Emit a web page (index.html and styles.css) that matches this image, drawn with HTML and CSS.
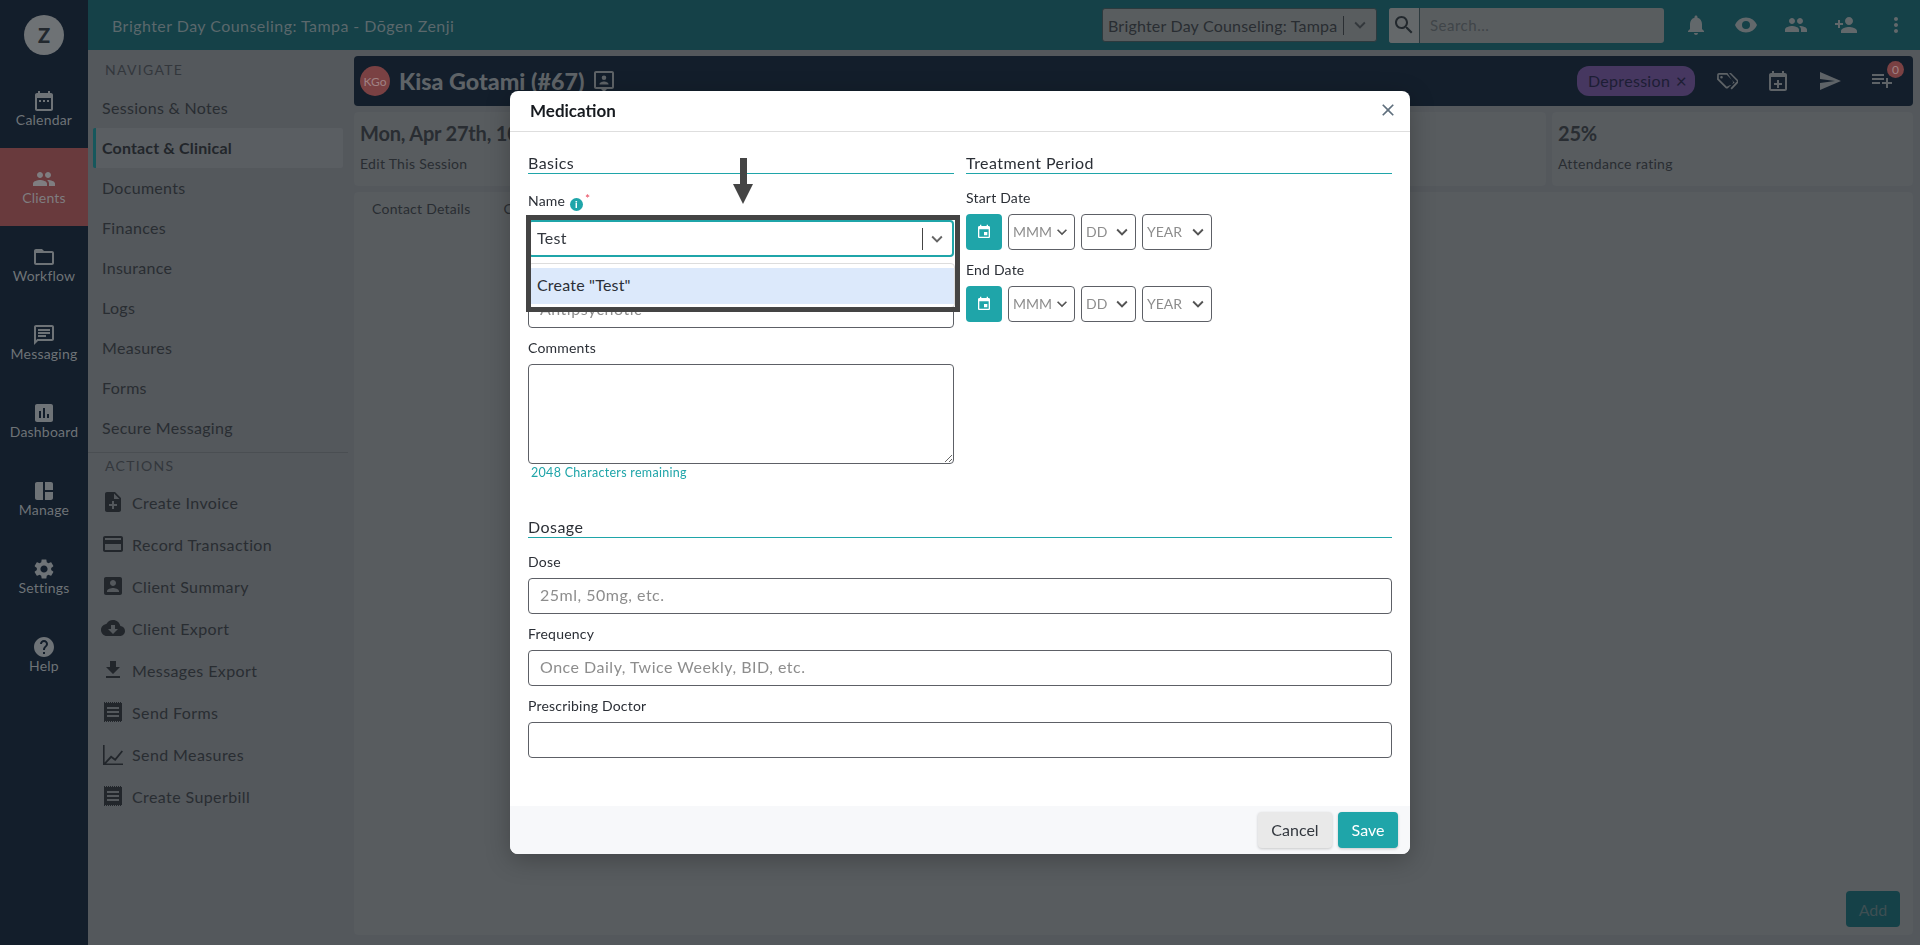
FILE: index.html
```html
<!DOCTYPE html>
<html lang="en">
<head>
    <meta charset="UTF-8">
    <meta name="viewport" content="width=device-width, initial-scale=1.0">
    <title>Medication</title>
    <link rel="stylesheet" href="styles.css">
</head>
<body>
<aside class="rail">
    <div class="rail_logo">Z</div>
    <a class="rail_item"><svg viewBox="0 0 24 24"><path d="M9 11H7v2h2v-2zm4 0h-2v2h2v-2zm4 0h-2v2h2v-2zm2-7h-1V2h-2v2H8V2H6v2H5c-1.11 0-1.99.9-1.99 2L3 20c0 1.1.89 2 2 2h14c1.1 0 2-.9 2-2V6c0-1.1-.9-2-2-2zm0 16H5V9h14v11z"/></svg>Calendar</a>
    <a class="rail_item active"><svg viewBox="0 0 24 24"><path d="M16 11c1.66 0 2.99-1.34 2.99-3S17.66 5 16 5c-1.66 0-3 1.34-3 3s1.34 3 3 3zm-8 0c1.66 0 2.99-1.34 2.99-3S9.66 5 8 5C6.34 5 5 6.34 5 8s1.34 3 3 3zm0 2c-2.33 0-7 1.17-7 3.5V19h14v-2.5c0-2.33-4.67-3.5-7-3.5zm8 0c-.29 0-.62.02-.97.05 1.16.84 1.97 1.97 1.97 3.45V19h6v-2.5c0-2.33-4.67-3.5-7-3.5z"/></svg>Clients</a>
    <a class="rail_item"><svg viewBox="0 0 24 24"><path d="M20 6h-8l-2-2H4c-1.1 0-1.99.9-1.99 2L2 18c0 1.1.9 2 2 2h16c1.1 0 2-.9 2-2V8c0-1.1-.9-2-2-2zm0 12H4V8h16v10z"/></svg>Workflow</a>
    <a class="rail_item"><svg viewBox="0 0 24 24"><path d="M20 2H4c-1.1 0-1.99.9-1.99 2L2 22l4-4h14c1.1 0 2-.9 2-2V4c0-1.1-.9-2-2-2zm0 14H5.17L4 17.17V4h16v12zM6 6h12v2H6zm0 3h12v2H6zm0 3h8v2H6z"/></svg>Messaging</a>
    <a class="rail_item"><svg viewBox="0 0 24 24"><path d="M19 3H5c-1.1 0-2 .9-2 2v14c0 1.1.9 2 2 2h14c1.1 0 2-.9 2-2V5c0-1.1-.9-2-2-2zM9 17H7v-7h2v7zm4 0h-2V7h2v10zm4 0h-2v-4h2v4z"/></svg>Dashboard</a>
    <a class="rail_item"><svg viewBox="0 0 24 24"><path d="M3 21h8V3H5c-1.1 0-2 .9-2 2v14c0 1.1.9 2 2 2zM13 3v8h8V5c0-1.1-.9-2-2-2zM13 21h6c1.1 0 2-.9 2-2v-6h-8z"/></svg>Manage</a>
    <a class="rail_item"><svg viewBox="0 0 24 24"><path d="M19.14 12.94c.04-.3.06-.61.06-.94 0-.32-.02-.64-.07-.94l2.03-1.58c.18-.14.23-.41.12-.61l-1.92-3.32c-.12-.22-.37-.29-.59-.22l-2.39.96c-.5-.38-1.03-.7-1.62-.94l-.36-2.54c-.04-.24-.24-.41-.48-.41h-3.84c-.24 0-.43.17-.47.41l-.36 2.54c-.59.24-1.13.57-1.62.94l-2.39-.96c-.22-.08-.47 0-.59.22L2.74 8.87c-.12.21-.08.47.12.61l2.03 1.58c-.05.3-.09.63-.09.94s.02.64.07.94l-2.03 1.58c-.18.14-.23.41-.12.61l1.92 3.32c.12.22.37.29.59.22l2.39-.96c.5.38 1.03.7 1.62.94l.36 2.54c.05.24.24.41.48.41h3.84c.24 0 .44-.17.47-.41l.36-2.54c.59-.24 1.13-.56 1.62-.94l2.39.96c.22.08.47 0 .59-.22l1.92-3.32c.12-.22.07-.47-.12-.61l-2.01-1.58zM12 15.6c-1.98 0-3.6-1.62-3.6-3.6s1.62-3.6 3.6-3.6 3.6 1.62 3.6 3.6-1.62 3.6-3.6 3.6z"/></svg>Settings</a>
    <a class="rail_item"><svg viewBox="0 0 24 24"><path d="M12 2C6.48 2 2 6.48 2 12s4.48 10 10 10 10-4.48 10-10S17.52 2 12 2zm1 17h-2v-2h2v2zm2.07-7.75l-.9.92C13.45 12.9 13 13.5 13 15h-2v-.5c0-1.1.45-2.1 1.17-2.83l1.24-1.26c.37-.36.59-.86.59-1.41 0-1.1-.9-2-2-2s-2 .9-2 2H8c0-2.21 1.79-4 4-4s4 1.79 4 4c0 .88-.36 1.68-.93 2.25z"/></svg>Help</a>
</aside>

<div class="page">
    <header class="topbar">
        <div class="topbar_title">Brighter Day Counseling: Tampa - Dōgen Zenji</div>
        <div class="practice_select">
            <span>Brighter Day Counseling: Tampa</span>
            <svg viewBox="0 0 24 24"><path d="M7.41 8.59 12 13.17l4.59-4.58L18 10l-6 6-6-6z"/></svg>
        </div>
        <div class="search">
            <div class="search_btn"><svg viewBox="0 0 24 24"><path d="M15.5 14h-.79l-.28-.27C15.41 12.59 16 11.11 16 9.5 16 5.91 13.09 3 9.5 3S3 5.91 3 9.5 5.91 16 9.5 16c1.61 0 3.09-.59 4.23-1.57l.27.28v.79l5 4.99L20.49 19l-4.99-5zm-6 0C7.01 14 5 11.99 5 9.5S7.01 5 9.5 5 14 7.01 14 9.5 11.99 14 9.5 14z"/></svg></div>
            <div class="search_input">Search...</div>
        </div>
        <div class="topbar_icons">
            <svg viewBox="0 0 24 24"><path d="M12 22c1.1 0 2-.9 2-2h-4c0 1.1.89 2 2 2zm6-6v-5c0-3.07-1.64-5.64-4.5-6.32V4c0-.83-.67-1.5-1.5-1.5s-1.5.67-1.5 1.5v.68C7.63 5.36 6 7.92 6 11v5l-2 2v1h16v-1l-2-2z"/></svg>
            <svg viewBox="0 0 24 24"><path fill-rule="evenodd" d="M12 4.5C7 4.5 2.73 7.61 1 12c1.73 4.39 6 7.5 11 7.5s9.27-3.11 11-7.5c-1.73-4.39-6-7.5-11-7.5zM12 8a4 4 0 1 0 0 8 4 4 0 0 0 0-8z"/></svg>
            <svg viewBox="0 0 24 24"><path d="M16 11c1.66 0 2.99-1.34 2.99-3S17.66 5 16 5c-1.66 0-3 1.34-3 3s1.34 3 3 3zm-8 0c1.66 0 2.99-1.34 2.99-3S9.66 5 8 5C6.34 5 5 6.34 5 8s1.34 3 3 3zm0 2c-2.33 0-7 1.17-7 3.5V19h14v-2.5c0-2.33-4.67-3.5-7-3.5zm8 0c-.29 0-.62.02-.97.05 1.16.84 1.97 1.97 1.97 3.45V19h6v-2.5c0-2.33-4.67-3.5-7-3.5z"/></svg>
            <svg viewBox="0 0 24 24"><path d="M15 12c2.21 0 4-1.79 4-4s-1.79-4-4-4-4 1.79-4 4 1.79 4 4 4zm-9-2V7H4v3H1v2h3v3h2v-3h3v-2H6zm9 4c-2.67 0-8 1.34-8 4v2h16v-2c0-2.66-5.33-4-8-4z"/></svg>
            <svg viewBox="0 0 24 24"><path d="M12 8c1.1 0 2-.9 2-2s-.9-2-2-2-2 .9-2 2 .9 2 2 2zm0 2c-1.1 0-2 .9-2 2s.9 2 2 2 2-.9 2-2-.9-2-2-2zm0 6c-1.1 0-2 .9-2 2s.9 2 2 2 2-.9 2-2-.9-2-2-2z"/></svg>
        </div>
    </header>

    <div class="content">
        <nav class="sidenav">
            <div class="sidenav_label">NAVIGATE</div>
            <a class="sidenav_link">Sessions &amp; Notes</a>
            <a class="sidenav_link active">Contact &amp; Clinical</a>
            <a class="sidenav_link">Documents</a>
            <a class="sidenav_link">Finances</a>
            <a class="sidenav_link">Insurance</a>
            <a class="sidenav_link">Logs</a>
            <a class="sidenav_link">Measures</a>
            <a class="sidenav_link">Forms</a>
            <a class="sidenav_link">Secure Messaging</a>
            <div class="sidenav_label actions">ACTIONS</div>
            <a class="action_link"><svg viewBox="0 0 24 24"><path d="M14 2H6c-1.1 0-1.99.9-1.99 2L4 20c0 1.1.89 2 1.99 2H18c1.1 0 2-.9 2-2V8l-6-6zm2 14h-3v3h-2v-3H8v-2h3v-3h2v3h3v2zm-3-7V3.5L18.5 9H13z"/></svg>Create Invoice</a>
            <a class="action_link"><svg viewBox="0 0 24 24"><path d="M20 4H4c-1.11 0-1.99.89-1.99 2L2 18c0 1.11.89 2 2 2h16c1.11 0 2-.89 2-2V6c0-1.11-.89-2-2-2zm0 14H4v-6h16v6zm0-10H4V6h16v2z"/></svg>Record Transaction</a>
            <a class="action_link"><svg viewBox="0 0 24 24"><path d="M3 5v14c0 1.1.89 2 2 2h14c1.1 0 2-.9 2-2V5c0-1.1-.9-2-2-2H5c-1.11 0-2 .9-2 2zm12 4c0 1.66-1.34 3-3 3s-3-1.34-3-3 1.34-3 3-3 3 1.34 3 3zm-9 8c0-2 4-3.1 6-3.1s6 1.1 6 3.1v1H6v-1z"/></svg>Client Summary</a>
            <a class="action_link"><svg viewBox="0 0 24 24"><path d="M19.35 10.04C18.67 6.59 15.64 4 12 4 9.11 4 6.6 5.64 5.35 8.04 2.34 8.36 0 10.91 0 14c0 3.31 2.69 6 6 6h13c2.76 0 5-2.24 5-5 0-2.64-2.05-4.78-4.65-4.96zM17 13l-5 5-5-5h3V9h4v4h3z"/></svg>Client Export</a>
            <a class="action_link"><svg viewBox="0 0 24 24"><path d="M19 9h-4V3H9v6H5l7 7 7-7zM5 18v2h14v-2H5z"/></svg>Messages Export</a>
            <a class="action_link"><svg viewBox="0 0 24 24"><path fill-rule="evenodd" d="M3 3h18v18H3zM6 7v2h12V7zm0 4v2h12v-2zm0 4v2h12v-2z"/><path class="teeth" d="M3 2.5h18M3 21.5h18"/></svg>Send Forms</a>
            <a class="action_link"><svg viewBox="0 0 24 24"><path d="M2 3h1.6v17.4L10 13.5l4 3 6.6-8L22 9.6 14.3 19l-4-3-5.2 5.4H22V23H2z"/></svg>Send Measures</a>
            <a class="action_link"><svg viewBox="0 0 24 24"><path fill-rule="evenodd" d="M3 3h18v18H3zM6 7v2h12V7zm0 4v2h12v-2zm0 4v2h12v-2z"/><path class="teeth" d="M3 2.5h18M3 21.5h18"/></svg>Create Superbill</a>
        </nav>

        <main class="main">
            <div class="client_bar">
                <div class="avatar">KGo</div>
                <h1>Kisa Gotami (#67)</h1>
                <svg class="client_note" viewBox="0 0 24 24"><path d="M20 2H4c-1.1 0-2 .9-2 2v14c0 1.1.9 2 2 2h5l3 3 3-3h5c1.1 0 2-.9 2-2V4c0-1.1-.9-2-2-2zm0 16H4V4h16v14zM12 11a2.3 2.3 0 1 0 0-4.6 2.3 2.3 0 0 0 0 4.6zm4.5 4c0-1.7-3-2.6-4.5-2.6S7.5 13.3 7.5 15v.6h9z"/></svg>
                <div class="client_actions">
                    <span class="chip">Depression <b>×</b></span>
                    <svg viewBox="0 0 24 24"><path d="M13.4 4H5c-1 0-1.8.8-1.8 1.8L3 10.500l8.500 8.500c.7.7 1.900.7 2.600 0l4.400-4.400c.7-.7.7-1.900 0-2.600zM12.800 17.700l-8-8V5.800h7.900l8 8zM7.500 7a1.300 1.300 0 1 0 0 2.600 1.300 1.300 0 0 0 0-2.600zM17 4h-2l8 8.300-6.500 7 1.300 1.200 7-7.300c.4-.4.4-1.100 0-1.500z"/></svg>
                    <svg viewBox="0 0 24 24"><path d="M19 4h-1V2h-2v2H8V2H6v2H5c-1.1 0-2 .9-2 2v14c0 1.1.9 2 2 2h14c1.1 0 2-.9 2-2V6c0-1.1-.9-2-2-2zm0 16H5V8h14v12zm-8-9h2v3h3v2h-3v3h-2v-3H8v-2h3z"/></svg>
                    <svg viewBox="0 0 24 24"><path d="M2.01 21L23 12 2.01 3 2 10l15 2-15 2z"/></svg>
                    <div class="queue">
                        <svg viewBox="0 0 24 24"><path d="M14 10H2v2h12v-2zm0-4H2v2h12V6zm4 8v-4h-2v4h-4v2h4v4h2v-4h4v-2h-4zM2 16h8v-2H2v2z"/></svg>
                        <span class="queue_count">0</span>
                    </div>
                </div>
            </div>

            <div class="cards">
                <div class="card"><strong>Mon, Apr 27th, 10:00am</strong><span>Edit This Session</span></div>
                <div class="card"></div>
                <div class="card"></div>
                <div class="card rating"><strong>25%</strong><span>Attendance rating</span></div>
            </div>

            <section class="panel">
                <div class="tabs"><a>Contact Details</a><a>Clinical</a></div>
                <button class="add_btn">Add</button>
            </section>
        </main>
    </div>
</div>

<div class="modal">
    <div class="modal_head">
        <h2>Medication</h2>
        <svg viewBox="0 0 24 24"><path d="M19 6.41 17.59 5 12 10.59 6.41 5 5 6.41 10.59 12 5 17.59 6.41 19 12 13.41 17.59 19 19 17.59 13.41 12z"/></svg>
    </div>
    <div class="modal_body">
        <div class="two_col">
            <div>
                <h3>Basics</h3>
                <div class="field name_field">
                    <label>Name <i class="info">i</i><em>*</em></label>
                    <div class="combo">
                        <span>Test</span>
                        <svg viewBox="0 0 24 24"><path d="M7.41 8.59 12 13.17l4.59-4.58L18 10l-6 6-6-6z"/></svg>
                    </div>
                    <div class="combo_menu"><div class="combo_option">Create "Test"</div></div>
                </div>
                <div class="field type_field">
                    <label>&nbsp;</label>
                    <input type="text" placeholder="Antipsychotic">
                </div>
                <div class="field">
                    <label>Comments</label>
                    <textarea></textarea>
                    <div class="remaining">2048 Characters remaining</div>
                </div>
            </div>
            <div>
                <h3>Treatment Period</h3>
                <div class="field">
                    <label>Start Date</label>
                    <div class="date_row">
                        <div class="date_btn"><svg viewBox="0 0 24 24"><path d="M19 3h-1V1h-2v2H8V1H6v2H5c-1.11 0-1.99.9-1.99 2L3 19c0 1.1.89 2 2 2h14c1.1 0 2-.9 2-2V5c0-1.1-.9-2-2-2zm0 16H5V8h14v11zM12 12h5v5h-5z"/></svg></div>
                        <div class="date_sel month">MMM<svg viewBox="0 0 24 24"><path d="M7.41 8.59 12 13.17l4.59-4.58L18 10l-6 6-6-6z"/></svg></div>
                        <div class="date_sel day">DD<svg viewBox="0 0 24 24"><path d="M7.41 8.59 12 13.17l4.59-4.58L18 10l-6 6-6-6z"/></svg></div>
                        <div class="date_sel year">YEAR<svg viewBox="0 0 24 24"><path d="M7.41 8.59 12 13.17l4.59-4.58L18 10l-6 6-6-6z"/></svg></div>
                    </div>
                </div>
                <div class="field">
                    <label>End Date</label>
                    <div class="date_row">
                        <div class="date_btn"><svg viewBox="0 0 24 24"><path d="M19 3h-1V1h-2v2H8V1H6v2H5c-1.11 0-1.99.9-1.99 2L3 19c0 1.1.89 2 2 2h14c1.1 0 2-.9 2-2V5c0-1.1-.9-2-2-2zm0 16H5V8h14v11zM12 12h5v5h-5z"/></svg></div>
                        <div class="date_sel month">MMM<svg viewBox="0 0 24 24"><path d="M7.41 8.59 12 13.17l4.59-4.58L18 10l-6 6-6-6z"/></svg></div>
                        <div class="date_sel day">DD<svg viewBox="0 0 24 24"><path d="M7.41 8.59 12 13.17l4.59-4.58L18 10l-6 6-6-6z"/></svg></div>
                        <div class="date_sel year">YEAR<svg viewBox="0 0 24 24"><path d="M7.41 8.59 12 13.17l4.59-4.58L18 10l-6 6-6-6z"/></svg></div>
                    </div>
                </div>
            </div>
        </div>

        <h3 class="dosage">Dosage</h3>
        <div class="field">
            <label>Dose</label>
            <input type="text" placeholder="25ml, 50mg, etc.">
        </div>
        <div class="field">
            <label>Frequency</label>
            <input type="text" placeholder="Once Daily, Twice Weekly, BID, etc.">
        </div>
        <div class="field">
            <label>Prescribing Doctor</label>
            <input type="text">
        </div>
    </div>
    <div class="modal_foot">
        <button class="btn_cancel">Cancel</button>
        <button class="btn_save">Save</button>
    </div>

    <!-- annotation drawn on top of the form -->
    <div class="callout_box"></div>
    <div class="callout_arrow"></div>
</div>
</body>
</html>
```
FILE: styles.css
```css
body {
    display: flex;
    height: 945px;
    margin: 0;
    overflow: hidden;
    background-color: #54585c;
    font-family: Lato, "Open Sans", sans-serif;
    color: #292d32;
}

svg {
    fill: currentColor;
}

/* left rail */
.rail {
    flex: none;
    width: 88px;
    background-color: #131e2b;
    color: #6e7377;
}

.rail_logo {
    display: flex;
    align-items: center;
    justify-content: center;
    width: 40px;
    height: 40px;
    margin: 15px 24px;
    border-radius: 50%;
    background-color: #6e7275;
    color: #22282e;
    font-size: 20px;
    font-weight: 900;
}

.rail_item {
    display: flex;
    flex-direction: column;
    align-items: center;
    height: 78px;
    box-sizing: border-box;
    padding-top: 19px;
    font-size: 14px;
    line-height: 18px;
    letter-spacing: 0.2px;
}

.rail_item svg {
    width: 24px;
    height: 24px;
    margin-bottom: -2px;
}

.rail_item.active {
    background-color: #693a3d;
    color: #7f7d80;
}

/* top bar */
.page {
    display: flex;
    flex: 1;
    flex-direction: column;
    min-width: 0;
}

.topbar {
    display: flex;
    flex: none;
    align-items: center;
    height: 50px;
    padding-left: 24px;
    background-color: #154148;
    box-sizing: border-box;
}

.topbar_title {
    flex: 1;
    color: #5b686c;
    font-size: 16px;
    letter-spacing: 0.45px;
}

.practice_select {
    display: flex;
    align-items: center;
    width: 275px;
    height: 34px;
    padding-left: 5px;
    box-sizing: border-box;
    border-radius: 3px;
    background-color: #595d5f;
    border: 1px solid #2d3a3e;
    font-size: 16px;
    letter-spacing: 0.2px;
    white-space: nowrap;
}

.practice_select span {
    padding-right: 6px;
    border-right: 1px solid #2a2e32;
}

.practice_select svg {
    width: 22px;
    height: 22px;
    margin-left: 5px;
    color: #33383c;
}

.search {
    display: flex;
    width: 275px;
    height: 35px;
    margin-left: 12px;
    border-radius: 3px;
    overflow: hidden;
    background-color: #595d5f;
}

.search_btn {
    display: flex;
    align-items: center;
    justify-content: center;
    width: 30px;
    border-right: 1px solid #2d3a3e;
    background-color: #64686a;
    color: #22282d;
}

.search_btn svg {
    width: 24px;
    height: 24px;
}

.search_input {
    padding: 8px 10px;
    color: #404549;
    font-size: 15px;
    letter-spacing: 0.5px;
}

.topbar_icons {
    display: flex;
    gap: 26px;
    padding: 0 12px 0 20px;
    color: #62686b;
}

.topbar_icons svg {
    width: 24px;
    height: 24px;
}

/* side navigation */
.content {
    display: flex;
    flex: 1;
    min-height: 0;
}

.sidenav {
    flex: none;
    width: 266px;
    padding-top: 10px;
    box-sizing: border-box;
}

.sidenav_label {
    height: 20px;
    margin-bottom: 8px;
    padding-left: 17px;
    color: #33373c;
    font-size: 14px;
    line-height: 20px;
    letter-spacing: 1.3px;
}

.sidenav_label.actions {
    height: 24px;
    margin: 4px 6px 4px 0;
    border-top: 1px solid #4a4e52;
    line-height: 26px;
}

.sidenav_link {
    display: block;
    height: 40px;
    margin: 0 11px 0 5px;
    padding-left: 6px;
    border-left: 3px solid transparent;
    border-radius: 2px;
    font-size: 16px;
    line-height: 39px;
    letter-spacing: 0.3px;
}

.sidenav_link.active {
    border-left-color: #16575c;
    background-color: #5a5e62;
    font-weight: 700;
    color: #22262b;
    letter-spacing: 0.15px;
}

.action_link {
    display: flex;
    align-items: center;
    gap: 7px;
    height: 42px;
    padding-left: 13px;
    font-size: 16px;
    letter-spacing: 0.4px;
}

.action_link svg {
    flex: none;
    width: 24px;
    height: 24px;
    color: #22262b;
}

.teeth {
    fill: none;
    stroke: currentColor;
    stroke-width: 1;
    stroke-dasharray: 1 1;
}

/* client header, cards, panel */
.main {
    display: flex;
    flex: 1;
    flex-direction: column;
    gap: 6px;
    min-width: 0;
    padding: 6px 7px 10px 0;
}

.client_bar {
    display: flex;
    flex: none;
    align-items: center;
    height: 50px;
    padding: 0 19px 0 6px;
    box-sizing: border-box;
    border-radius: 4px;
    background-color: #131e2b;
    color: #5e6367;
}

.avatar {
    display: flex;
    align-items: center;
    justify-content: center;
    width: 30px;
    height: 30px;
    border-radius: 50%;
    background-color: #7a4143;
    color: #a08284;
    font-size: 12px;
}

.client_bar h1 {
    margin: 0 8px 0 9px;
    font-size: 23.3px;
    font-weight: 900;
    white-space: nowrap;
}

.client_note {
    width: 24px;
    height: 24px;
}

.client_actions {
    display: flex;
    align-items: center;
    gap: 28px;
    margin-left: auto;
}

.client_actions svg {
    width: 24px;
    height: 24px;
}

.chip {
    display: flex;
    align-items: center;
    justify-content: space-between;
    width: 118px;
    height: 30px;
    margin-right: -9px;
    padding: 0 8px 2px 11px;
    box-sizing: border-box;
    border-radius: 12px;
    background-color: #463760;
    color: #1d1e35;
    font-size: 16px;
    letter-spacing: 0.3px;
}

.chip b {
    font-size: 19px;
    font-weight: 400;
}

.queue {
    position: relative;
}

.queue_count {
    position: absolute;
    top: -7px;
    right: -10px;
    width: 17px;
    height: 17px;
    border-radius: 50%;
    background-color: #7a4143;
    color: #a08284;
    font-size: 12px;
    line-height: 17px;
    text-align: center;
}

.cards {
    display: flex;
    flex: none;
    gap: 6px;
    height: 74px;
}

.card {
    display: flex;
    flex: 1;
    flex-direction: column;
    gap: 9px;
    padding: 8px 6px;
    box-sizing: border-box;
    border-radius: 4px;
    background-color: #585c5f;
}

.card.rating {
    flex: none;
    width: 361px;
}

.card strong {
    font-size: 20px;
    line-height: 26px;
    letter-spacing: -0.2px;
    white-space: nowrap;
}

.card span {
    font-size: 14px;
    letter-spacing: 0.3px;
}

.panel {
    display: flex;
    flex: 1;
    flex-direction: column;
    border-radius: 4px;
    background-color: #585c5f;
}

.tabs {
    display: flex;
    gap: 33px;
    padding: 8px 18px;
    font-size: 14px;
    line-height: 18px;
    letter-spacing: 0.25px;
}

.add_btn {
    align-self: flex-end;
    width: 54px;
    height: 36px;
    margin: auto 13px 8px 0;
    border: none;
    border-radius: 4px;
    background-color: #154148;
    color: #3e4f53;
    font-family: inherit;
    font-size: 16px;
}

/* modal */
.modal {
    position: fixed;
    top: 91px;
    left: 510px;
    display: flex;
    flex-direction: column;
    width: 900px;
    height: 763px;
    border-radius: 8px;
    overflow: hidden;
    background-color: #fff;
    box-shadow: 0 6px 24px rgba(0, 0, 0, 0.25);
}

.modal_head {
    display: flex;
    flex: none;
    align-items: center;
    justify-content: space-between;
    height: 41px;
    padding: 0 12px 2px 20px;
    box-sizing: border-box;
    border-bottom: 1px solid #dedede;
}

.modal_head h2 {
    margin: 0;
    color: #161a1f;
    font-size: 17px;
    font-weight: 700;
}

.modal_head svg {
    width: 20px;
    height: 20px;
    color: #5f6f7d;
}

.modal_body {
    flex: 1;
    padding: 20px 18px 0;
}

.two_col {
    display: grid;
    grid-template-columns: 426px 426px;
    gap: 12px;
}

.modal_body h3 {
    height: 21px;
    margin: 0 0 14px;
    border-bottom: 1px solid #1fa5a9;
    color: #2b2f36;
    font-size: 16px;
    font-weight: 400;
    line-height: 22px;
    letter-spacing: 0.45px;
}

.modal_body h3.dosage {
    margin-top: 32px;
}

.field {
    position: relative;
    display: flex;
    flex-direction: column;
    margin-top: 10px;
}

.field label {
    height: 20px;
    margin-bottom: 6px;
    color: #2b2f36;
    font-size: 14px;
    line-height: 20px;
    letter-spacing: 0.2px;
}

.name_field label {
    height: 24px;
    margin-bottom: 8px;
    line-height: 21px;
}

.type_field {
    margin-top: 9px;
}

.info {
    display: inline-block;
    width: 13px;
    height: 13px;
    margin-left: 1px;
    border-radius: 50%;
    background-color: #1fa5a9;
    color: #fff;
    font-size: 10px;
    font-style: normal;
    font-weight: 900;
    line-height: 13px;
    text-align: center;
    vertical-align: -2px;
}

.field em {
    margin-left: 2px;
    color: #e8455a;
    font-size: 12px;
    font-style: normal;
    vertical-align: 3px;
}

.combo {
    display: flex;
    align-items: center;
    height: 37px;
    padding-left: 7px;
    box-sizing: border-box;
    border: 2px solid #1fa5a9;
    border-radius: 4px;
    font-size: 16px;
    letter-spacing: 0.3px;
}

.combo span {
    flex: 1;
    padding-bottom: 3px;
    color: #33383f;
}

.combo svg {
    width: 24px;
    height: 22px;
    margin-right: 3px;
    padding-left: 2px;
    box-sizing: content-box;
    color: #666;
    border-left: 1px solid #444;
}

.combo_menu {
    position: absolute;
    top: 75px;
    left: 0;
    z-index: 2;
    width: 427px;
    padding: 4px 0 3px;
    box-sizing: border-box;
    border: 1px solid #ddd;
    border-radius: 4px;
    background-color: #fff;
}

.combo_option {
    height: 36px;
    padding-left: 8px;
    background-color: #dce9fb;
    color: #2b2f36;
    font-size: 16px;
    line-height: 33px;
    letter-spacing: 0.2px;
}

input,
textarea {
    display: block;
    width: 100%;
    height: 36px;
    padding: 0 11px 3px;
    box-sizing: border-box;
    border: 1px solid #5d6066;
    border-radius: 4px;
    color: #33383f;
    font-family: inherit;
    font-size: 16px;
    letter-spacing: 0.5px;
    outline: none;
}

textarea {
    height: 100px;
}

input::placeholder {
    color: #8d8d8d;
}

.remaining {
    height: 20px;
    padding-left: 3px;
    color: #1fa5a9;
    font-size: 12.5px;
    line-height: 17px;
    letter-spacing: 0.3px;
}

.date_row {
    display: flex;
    gap: 6px;
}

.date_btn {
    display: flex;
    align-items: center;
    justify-content: center;
    width: 36px;
    height: 36px;
    border-radius: 4px;
    background-color: #1fa5a9;
    color: #fff;
}

.date_btn svg {
    width: 16px;
    height: 16px;
}

.date_sel {
    display: flex;
    align-items: center;
    justify-content: space-between;
    height: 36px;
    padding: 0 2px 1px 4px;
    box-sizing: border-box;
    border: 1px solid #5d6066;
    border-radius: 4px;
    color: #8d8d8d;
    font-size: 14px;
}

.date_sel svg {
    width: 22px;
    height: 22px;
    color: #555;
}

.date_sel.month { width: 67px; }
.date_sel.day { width: 55px; }
.date_sel.year { width: 70px; }

.modal_foot {
    display: flex;
    flex: none;
    justify-content: flex-end;
    gap: 6px;
    height: 48px;
    padding: 6px 12px;
    box-sizing: border-box;
    background-color: #f7f8fa;
}

.modal_foot button {
    padding-bottom: 3px;
    border: none;
    border-radius: 4px;
    font-family: inherit;
    font-size: 16px;
    box-shadow: 0 1px 3px rgba(0, 0, 0, 0.2);
}

.btn_cancel {
    width: 74px;
    background-color: #e9e9e9;
    color: #33383f;
}

.btn_save {
    width: 60px;
    background-color: #1fa5a9;
    color: #fff;
}

.callout_box {
    position: absolute;
    top: 124px;
    left: 16px;
    z-index: 3;
    width: 434px;
    height: 97px;
    box-sizing: border-box;
    border: 5px solid #444;
}

.callout_arrow {
    position: absolute;
    top: 67px;
    left: 230px;
    z-index: 3;
    width: 7px;
    height: 27px;
    background-color: #444;
}

.callout_arrow::after {
    content: "";
    position: absolute;
    top: 26px;
    left: -7px;
    border-style: solid;
    border-width: 20px 10.5px 0;
    border-color: #444 transparent transparent;
}
```
